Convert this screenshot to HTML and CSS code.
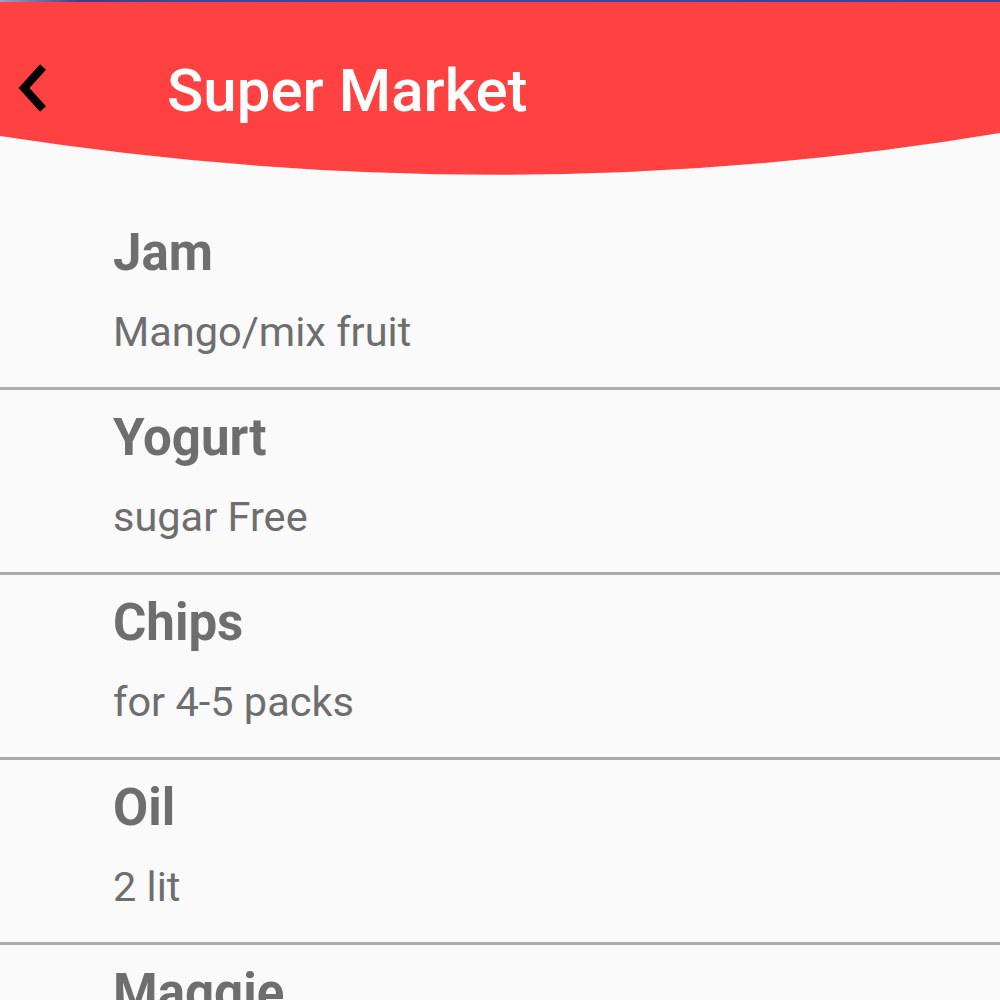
FILE: index.html
```html
<!DOCTYPE html>
<html>
<head>
<meta charset="utf-8">
<link rel="stylesheet" href="styles.css">
</head>
<body>
<div class="status"></div>
<header class="appbar">
  <button class="back" aria-label="Back">
    <svg width="40" height="60" viewBox="0 0 40 60"><path d="M32 9 L13 30 L32 51" fill="none" stroke="#000" stroke-width="8" stroke-linecap="butt" stroke-linejoin="miter"/></svg>
  </button>
  <h1 class="title">Super Market</h1>
</header>
<ul class="list">
  <li class="item"><div class="name">Jam</div><div class="desc">Mango/mix fruit</div></li>
  <li class="item"><div class="name">Yogurt</div><div class="desc">sugar Free</div></li>
  <li class="item"><div class="name">Chips</div><div class="desc">for 4-5 packs</div></li>
  <li class="item"><div class="name">Oil</div><div class="desc">2 lit</div></li>
  <li class="item"><div class="name">Maggie</div><div class="desc">2 packs</div></li>
</ul>
</body>
</html>
```
FILE: styles.css
```css
html, body {
  margin: 0;
  padding: 0;
  background: #fafafa;
  font-family: Roboto, "Liberation Sans", sans-serif;
  overflow: hidden;
  height: 1000px;
}
.status {
  height: 2px;
  background: linear-gradient(90deg, #9aa0c8 0%, #3b3f8f 8%, #3d4aa3 20%, #3a44a0 100%);
}
.appbar {
  height: 174px;
  background: #ff4141;
  clip-path: path('M0 0 H1000 V131 Q510 213 0 134 Z');
  display: flex;
  align-items: flex-start;
}
.back {
  border: 0;
  background: none;
  padding: 0;
  margin: 56px 0 0 11px;
  width: 40px;
  height: 60px;
  display: flex;
}
.title {
  margin: 54px 0 0 116px;
  font-size: 60px;
  font-weight: 500;
  color: #fff;
  line-height: 70px;
}
.list {
  list-style: none;
  margin: 29px 0 0;
  padding: 0;
}
.item {
  padding: 18px 0 29px 113px;
  border-bottom: 3px solid #ababab;
  color: #6e6e6e;
}
.name {
  font-size: 51px;
  font-weight: 700;
  line-height: 60px;
}
.desc {
  margin-top: 22px;
  font-size: 41.5px;
  line-height: 53px;
}
```
